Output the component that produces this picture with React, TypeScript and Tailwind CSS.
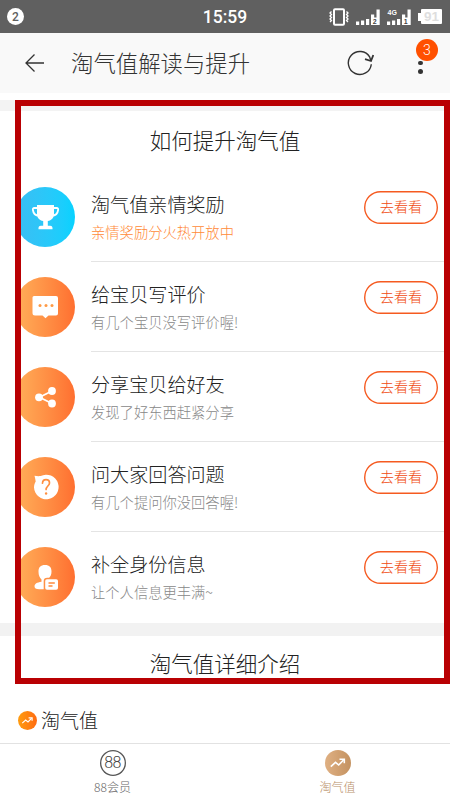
import type { ReactNode } from "react";
import { clsx } from "clsx";

type Task = {
  title: string;
  hint: string;
  icon: ReactNode;
  highlight?: boolean;
};

const tasks: Task[] = [
  { title: "淘气值亲情奖励", hint: "亲情奖励分火热开放中", icon: <TrophyIcon />, highlight: true },
  { title: "给宝贝写评价", hint: "有几个宝贝没写评价喔!", icon: <CommentIcon /> },
  { title: "分享宝贝给好友", hint: "发现了好东西赶紧分享", icon: <ShareIcon /> },
  { title: "问大家回答问题", hint: "有几个提问你没回答喔!", icon: <QuestionIcon /> },
  { title: "补全身份信息", hint: "让个人信息更丰满~", icon: <ProfileIcon /> },
];

function TrophyIcon() {
  return (
    <svg viewBox="0 0 60 60" className="size-full">
      <path
        d="M22.500 21h-3.200c-1.200 0-1.600.6-1.400 2 .5 3.600 2.800 5.700 6.100 5.700M38.500 21h3.200c1.200 0 1.600.6 1.400 2-.5 3.600-2.800 5.700-6.100 5.700"
        fill="none"
        stroke="#fff"
        strokeWidth="1.800"
      />
      <path
        d="M22 18h17v9c0 4-2.500 6.300-6.200 7v4.800h2.400c1.300 0 2.200.8 2.300 2.100v1.300H23.500v-1.300c.1-1.300 1-2.100 2.300-2.100h2.400V34c-3.700-.7-6.200-3-6.200-7z"
        fill="#fff"
      />
    </svg>
  );
}

function CommentIcon() {
  return (
    <svg viewBox="0 0 60 60" className="size-full">
      <path
        d="M20 19h21a2 2 0 0 1 2 2v15.500a2 2 0 0 1-2 2h-7.500l-3 2.700-3-2.700H20a2.500 2.500 0 0 1-2.500-2.500V20.500A1.500 1.500 0 0 1 19 19z"
        fill="#fff"
      />
      <g fill="#ff9a45">
        <circle cx="25" cy="28.500" r="1.500" />
        <circle cx="31" cy="28.500" r="1.500" />
        <circle cx="37" cy="28.500" r="1.500" />
      </g>
    </svg>
  );
}

function ShareIcon() {
  return (
    <svg viewBox="0 0 60 60" className="size-full">
      <path d="M37 24 24.500 30.200 37 36.500" fill="none" stroke="#fff" strokeWidth="1.800" />
      <g fill="#fff">
        <circle cx="24" cy="30.300" r="3.900" />
        <circle cx="37" cy="24" r="3.900" />
        <circle cx="37" cy="36.500" r="3.900" />
      </g>
    </svg>
  );
}

function QuestionIcon() {
  return (
    <svg viewBox="0 0 60 60" className="size-full">
      <path
        d="M19.500 18.800c2.200.3 4.200.5 6.200.2A12.300 12.300 0 1 1 19 30.500c0-2.300.7-4.300 1.700-6-.2-1.900-.7-3.700-1.200-5.700z"
        fill="#fff"
      />
      <path
        d="M27.500 26.200c.1-2.200 1.500-3.600 3.500-3.600s3.500 1.400 3.500 3.300c0 3-3.400 3.300-3.400 6.600"
        fill="none"
        stroke="#ff8f3f"
        strokeWidth="1.700"
        strokeLinecap="round"
      />
      <circle cx="31.100" cy="36.500" r="1.200" fill="#ff8f3f" />
    </svg>
  );
}

function ProfileIcon() {
  return (
    <svg viewBox="0 0 60 60" className="size-full">
      <path
        d="M30 18c4.500 0 6.500 2.300 6.500 6.500 0 2.800-.8 4.800-2.300 6.300h-2c-2.200 0-3.500 1.200-3.500 3.200v8.300h-4.500c-3.400 0-4.700-1.200-4.700-3 0-2.600 2.400-3.900 7-4.600v-2.300c-1.800-1.500-3-4.100-3-7.900 0-4.200 2-6.500 6.500-6.500z"
        fill="#fff"
      />
      <rect x="30.200" y="32.300" width="12.800" height="10.500" rx="1.800" fill="#fff" />
      <path d="M33.500 36h6.300M33.500 39h4" stroke="#ff8a3c" strokeWidth="1.400" />
    </svg>
  );
}

function TrendIcon() {
  return (
    <svg viewBox="0 0 26 26" fill="none" stroke="#fff" strokeWidth="1.600">
      <path d="M5.800 16.600l4.700-4.300 3.200 2.700 4.800-5" />
      <path d="M14.500 9.300h4.800v4" />
    </svg>
  );
}

function SignalIcon({ sim, label }: { sim: string; label?: string }) {
  return (
    <svg viewBox="0 0 25 18" className="h-[18px] w-[25px] font-['Liberation_Sans'] font-bold">
      <g fill="#fff">
        <path d="M0 13.500h3.200V17H0zM5 12.500h3.200V17H5zM10 11h3.200v6H10zM15 6.500h3.200V17H15zM20.500 1.500h3.200V17h-3.200z" />
        <path d="M16 9.500h7V17h-7z" />
        {label && (
          <text x=".5" y="7" fontSize="7">
            {label}
          </text>
        )}
      </g>
      <text x="16.800" y="16" fontSize="7" fill="#444">
        {sim}
      </text>
    </svg>
  );
}

function StatusBar() {
  return (
    <div className="grid h-[33px] grid-cols-3 items-center bg-[#606060] font-['Roboto'] text-white">
      <div className="ml-[7px] flex size-[17px] items-center justify-center rounded-full bg-white text-xs font-medium text-[#606060]">
        2
      </div>
      <div className="pt-px text-center text-[17.500px] leading-5 font-medium">15:59</div>
      <div className="flex items-center justify-end pr-2">
        <svg viewBox="0 0 20 18" className="mr-[7px] h-[18px] w-5 shrink-0" fill="none" stroke="#fff">
          <rect x="5" y="1.200" width="10" height="15.600" rx="1" strokeWidth="2" />
          <path
            d="M2.500 3.500 1 5l1.500 1.500L1 8l1.500 1.500L1 11l1.500 1.500L1 14M17.500 3.500 19 5l-1.500 1.500L19 8l-1.500 1.500L19 11l-1.500 1.500L19 14"
            strokeWidth="1.300"
          />
        </svg>
        <div className="flex shrink-0 gap-1.5">
          <SignalIcon sim="2" />
          <SignalIcon sim="1" label="4G" />
        </div>
        <div className="ml-[6px] flex shrink-0 items-center">
          <div className="h-2 w-[3px] bg-white" />
          <div className="flex h-[15px] w-[21px] items-center justify-center rounded-[1px] bg-white font-['Liberation_Sans'] text-[13.500px] leading-none font-bold text-[#dedede]">
            91
          </div>
        </div>
      </div>
    </div>
  );
}

function Header() {
  return (
    <header className="flex h-[60px] items-center bg-[#f9f9f9] pl-[25px] text-[#333]">
      <svg viewBox="0 0 20 18" className="h-[18px] w-5" fill="none" stroke="currentColor" strokeWidth="1.300">
        <path d="M9.500.5 1 9l8.500 8.500M1 9h18" />
      </svg>
      <h1 className="ml-[26px] pb-0.5 text-[22.400px] leading-none">淘气值解读与提升</h1>
      <svg
        viewBox="0 0 28 28"
        className="ml-auto size-7"
        fill="none"
        stroke="currentColor"
        strokeWidth="1.400"
      >
        <path d="M25.300 15.200A11.500 11.500 0 1 1 23.800 8.200l.8 2.800" />
        <path d="M19 10.200 25 12 27.300 6" strokeWidth="1.800" />
      </svg>
      <div className="relative mr-[27.500px] ml-[44px] flex flex-col gap-[4px] pt-2">
        <span className="size-[4.500px] rounded-full bg-[#333]" />
        <span className="size-[4.500px] rounded-full bg-[#333]" />
        <span className="absolute -top-[14px] -left-[2px] flex size-[22px] items-center justify-center rounded-full bg-[#ff5000] font-['Roboto'] text-sm font-light text-white">
          3
        </span>
      </div>
    </header>
  );
}

function TaskRow({ task, last }: { task: Task; last: boolean }) {
  return (
    <li className="flex h-[90px] pl-[15px]">
      <div
        className={clsx(
          "mt-[15px] size-[60px] shrink-0 rounded-full bg-linear-to-r",
          task.highlight ? "from-[#3abdf3] to-[#05d2ff]" : "from-[#ffb05a] to-[#ff6f30]"
        )}
      >
        {task.icon}
      </div>
      <div
        className={clsx(
          "mr-1.5 ml-4 flex flex-1 justify-between border-b pr-1.5",
          last ? "border-transparent" : "border-[#e4e4e4]"
        )}
      >
        <div className="pt-[20px]">
          <h3 className="text-[19.100px] leading-6 text-[#222]">{task.title}</h3>
          <p
            className={clsx(
              "mt-[6px] text-[14.300px] leading-5",
              task.highlight ? "text-[#ff8a38]" : "text-[#888]"
            )}
          >
            {task.hint}
          </p>
        </div>
        <button className="mt-[19px] flex h-[33px] w-[74px] items-center justify-center rounded-full pb-0.5 text-[14.200px] leading-none text-[#f04a10] ring-[1.400px] ring-[#f55a20] ring-inset">
          去看看
        </button>
      </div>
    </li>
  );
}

function BottomNav() {
  return (
    <nav className="grid h-[57px] grid-cols-2 border-t border-[#e2e2e2] bg-white text-xs leading-4">
      <div className="flex flex-col items-center pt-[6px] text-[#666]">
        <span className="flex size-[26px] items-center justify-center rounded-full font-['Roboto'] text-base tracking-[-0.500px] text-[#444] ring-[1.300px] ring-[#555] ring-inset">
          88
        </span>
        <span className="mt-[3px]">88会员</span>
      </div>
      <div className="flex flex-col items-center pt-[6px] text-[#b98f68]">
        <span className="size-[26px] rounded-full bg-linear-to-r from-[#dfb083] to-[#c49260]">
          <TrendIcon />
        </span>
        <span className="mt-[3px]">淘气值</span>
      </div>
    </nav>
  );
}

export default function App() {
  return (
    <div className="relative flex h-[800px] w-[450px] flex-col overflow-hidden bg-white font-['Noto_Sans_CJK_SC',sans-serif] font-light">
      <StatusBar />
      <Header />
      <main className="flex-1">
        <div className="mt-[7px] h-[11px] bg-[#f3f3f3]" />
        <section className="h-[512px]">
          <h2 className="pt-[17px] pb-[20px] text-center text-[21.500px] leading-6 text-[#222]">如何提升淘气值</h2>
          <ul>
            {tasks.map((task, i) => (
              <TaskRow key={task.title} task={task} last={i === tasks.length - 1} />
            ))}
          </ul>
        </section>
        <div className="h-[13px] bg-[#f2f2f2]" />
        <section>
          <h2 className="pt-[15px] text-center text-[21.500px] leading-6 text-[#222]">淘气值详细介绍</h2>
          <div className="mt-[33px] flex items-center gap-1 pl-[18px]">
            <span className="size-[19px] rounded-full bg-linear-to-r from-[#ff9c10] to-[#ff6a10]">
              <TrendIcon />
            </span>
            <span className="text-[19px] leading-6 text-[#222]">淘气值</span>
          </div>
        </section>
      </main>
      <BottomNav />
      {/* red highlight box over the task area */}
      <div className="pointer-events-none absolute top-[100px] left-[14.500px] h-[583.500px] w-[435px] border-6 border-[#b90003]" />
      <div className="absolute top-[180px] left-0 h-[430px] w-[14.500px] bg-white" />
    </div>
  );
}
